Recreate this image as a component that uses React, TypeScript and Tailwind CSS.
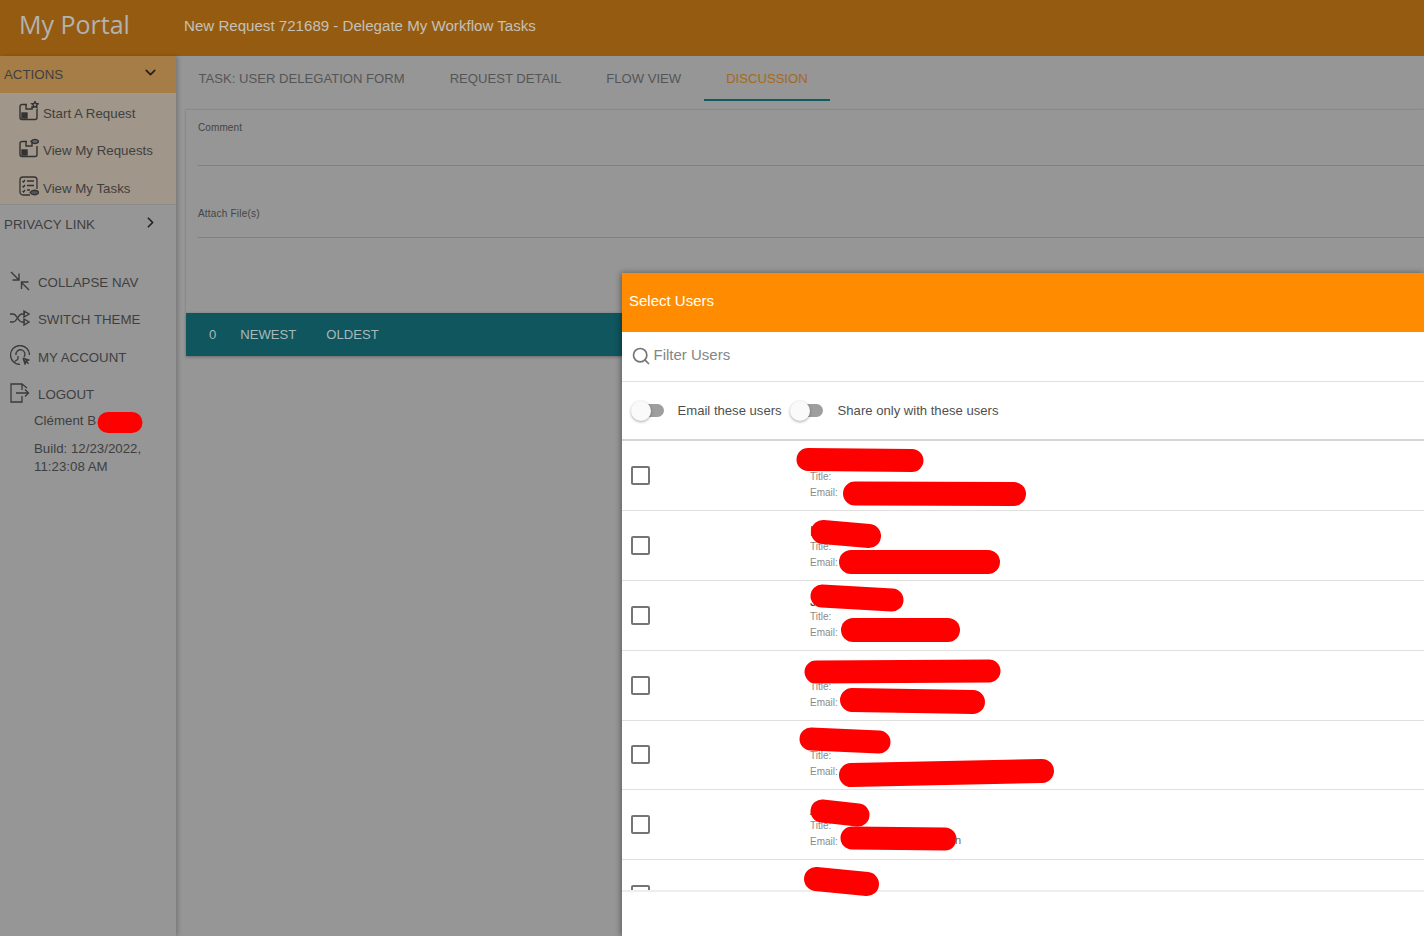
import React from "react";
import { Search, ChevronDown, ChevronRight } from "lucide-react";

const Pkg = ({ eye }: { eye?: boolean }) => (
  <svg width="20" height="20" viewBox="0 0 20 20" fill="none" stroke="#333" strokeWidth="1.400">
    <path d="M8 3.500H3a2 2 0 0 0-2 2V16.500a2 2 0 0 0 2 2h13a2 2 0 0 0 2-2V8" />
    <rect x="3" y="12" width="5" height="5" fill="#333" />
    <path d="M7 4v4h6V5" />
    {eye ? (
      <path d="M12 3.500c2-2.800 6-2.800 8 0-2 2.800-6 2.800-8 0z" fill="#666" />
    ) : (
      <path d="M16 .5l1 2 2.200.3-1.600 1.500.4 2.200-2-1-2 1 .4-2.200-1.600-1.500 2.200-.3z" />
    )}
  </svg>
);

const Tasks = () => (
  <svg width="20" height="20" viewBox="0 0 20 20" fill="none" stroke="#333" strokeWidth="1.300">
    <path d="M11 19H4a3 3 0 0 1-3-3V4a3 3 0 0 1 3-3h11a3 3 0 0 1 3 3v9" />
    <path d="M3.500 5l1 1 1.500-2M3.500 10l1 1 1.500-2M3.500 15l1 1 1.500-2M8 5h7M8 9.500h7M8 14h3" />
    <path d="M11 16.500c2-3 7-3 9 0-2 3-7 3-9 0z" fill="#555" />
  </svg>
);

const Collapse = () => (
  <svg width="20" height="20" viewBox="0 0 20 20" fill="none" stroke="#3a3a3a" strokeWidth="1.400">
    <path d="M1 1l8 8M9 2.500V9H2.500M19 19l-8-8M11.500 18v-7h7" />
  </svg>
);

const Theme = () => (
  <svg width="20" height="20" viewBox="0 0 20 20" fill="none" stroke="#3a3a3a" strokeWidth="1.400">
    <path d="M0 6h3c4 0 5 8 9 8h3M0 14h3c4 0 5-8 9-8h3M14 3l5 3-5 3zM14 11l5 3-5 3z" />
  </svg>
);

const Account = () => (
  <svg width="20" height="20" viewBox="0 0 20 20" fill="none" stroke="#3a3a3a" strokeWidth="1.300">
    <path d="M10 19.500A9.500 9.500 0 1 1 19.500 10" />
    <path d="M6 10a4.500 4.500 0 1 1 8 2M8 11v2.500c0 1.500-2 2-3.500 3" />
    <path d="M13 13l6 2-2.500 1 2 3M13 13l2 6 1.500-3" fill="#3a3a3a" />
  </svg>
);

const Logout = () => (
  <svg width="20" height="20" viewBox="0 0 20 20" fill="none" stroke="#3a3a3a" strokeWidth="1.300">
    <path d="M12 7V1H1v18h11v-6h0M6 10h12M15 6.500l3.500 3.500-3.500 3.500M12 1l5 4" />
  </svg>
);

const Toggle = () => (
  <span className="relative block w-[33px] h-[20px]">
    <span className="absolute left-[6px] top-[3.500px] w-[27px] h-[13px] rounded-full bg-[#9e9e9e]" />
    <span className="absolute left-0 top-0 w-[20px] h-[20px] rounded-full bg-[#fafafa] shadow-[0_1px_3px_rgba(0,0,0,0.35)]" />
  </span>
);

const Row = ({ h, name, text = true, up }: { h: string; name?: string; text?: boolean; up?: boolean }) => (
  <div className={`${h} shrink-0 flex items-center pl-[9px] border-b border-[#e0e0e0]`}>
    <span className={`w-[19px] h-[19px] rounded-[2px] border-2 border-[#757575] ${up ? "-mt-[2px]" : ""}`} />
    {text && (
      <div className="ml-[160.500px] pt-[2px] text-[10px] leading-[16px] text-[#8a8a8a]">
        <div className="h-[16px] text-[14px] text-[#444]">{name}</div>
        <div>Title:</div>
        <div>Email:</div>
      </div>
    )}
  </div>
);

const Nav = ({ icon, label }: { icon: React.ReactNode; label: string }) => (
  <div className="h-[37.300px] flex items-center pl-[10px] gap-[8px] text-[13.300px] text-[#3f3f3f]">
    <span className="w-[20px] h-[20px] -mt-[2px]">{icon}</span>
    <span className="mt-[3px]">{label}</span>
  </div>
);

const Sub = ({ icon, label }: { icon: React.ReactNode; label: string }) => (
  <div className="h-[37.300px] flex items-center pl-[19px] gap-[4px] text-[13.300px] text-[#3f3f3f]">
    <span className="w-[20px] h-[20px] -mt-[1px]">{icon}</span>
    <span className="mt-[5px]">{label}</span>
  </div>
);

const Tab = ({ label, active }: { label: string; active?: boolean }) => (
  <div className={`h-[45px] px-[22.500px] flex items-center text-[13.100px] whitespace-nowrap ${active ? "text-[#a5691b] border-y-2 border-t-transparent border-b-[#0d5c63]" : "text-[#555]"}`}>
    {label}
  </div>
);

const Blot = ({ d, w }: { d: string; w: number }) => (
  <path d={d} stroke="#ff0000" strokeWidth={w} strokeLinecap="round" fill="none" />
);

export default function App() {
  return (
    <div className="relative w-[1424px] h-[936px] overflow-hidden bg-[#969696] font-['Liberation_Sans',Arial,sans-serif]">
      <div className="h-[56px] flex bg-[#955c11]">
        <div className="w-[176px] shrink-0 pl-[19px] pt-[6px] text-[25px] leading-[36px] font-medium text-[#b2b2b2] font-['Open_Sans',sans-serif]">
          My Portal
        </div>
        <div className="pl-[8px] pt-[16px] text-[15.100px] leading-[20px] text-[#c4c0b8]">
          New Request 721689 - Delegate My Workflow Tasks
        </div>
      </div>

      <div className="flex h-[880px]">
        <aside className="w-[176px] shrink-0 bg-[#969696] shadow-[2px_0_4px_rgba(0,0,0,0.2)] z-10">
          <div className="h-[37px] bg-[#a67d46] flex items-center justify-between pl-[4px] pr-[17px] text-[13.300px] text-[#3f3f3f]">
            <span>ACTIONS</span>
            <ChevronDown size={17} strokeWidth={2.400} className="text-[#222] -mt-[4px]" />
          </div>
          <div className="h-[112px] bg-[#a0968a] border-b border-[#8c8c8c]">
            <Sub icon={<Pkg />} label="Start A Request" />
            <Sub icon={<Pkg eye />} label="View My Requests" />
            <Sub icon={<Tasks />} label="View My Tasks" />
          </div>
          <div className="h-[37px] flex items-center justify-between pl-[4px] pr-[17px] text-[13.400px] text-[#3f3f3f]">
            <span className="mt-[3px]">PRIVACY LINK</span>
            <ChevronRight size={17} strokeWidth={2.400} className="text-[#222] -mt-[2px]" />
          </div>
          <div className="h-[21px]" />
          <Nav icon={<Collapse />} label="COLLAPSE NAV" />
          <Nav icon={<Theme />} label="SWITCH THEME" />
          <Nav icon={<Account />} label="MY ACCOUNT" />
          <Nav icon={<Logout />} label="LOGOUT" />
          <div className="pl-[34px] pr-[30px] text-[13.300px] leading-[18px] text-[#3f3f3f]">
            <div className="mb-[10px]">Clément B</div>
            <div>Build: 12/23/2022, 11:23:08 AM</div>
          </div>
        </aside>

        <main className="flex-1 min-w-0 pl-[10px]">
          <div className="flex h-[45px] -ml-[10px]">
            <Tab label="TASK: USER DELEGATION FORM" />
            <Tab label="REQUEST DETAIL" />
            <Tab label="FLOW VIEW" />
            <Tab label="DISCUSSION" active />
          </div>
          <div className="mt-[9px] h-[203px] bg-[#969696] shadow-[0_0_2px_rgba(0,0,0,0.25)] pl-[12px]">
            <div className="pt-[12px] text-[10px] leading-[12px] text-[#444] tracking-[0.1px]">Comment</div>
            <div className="mt-[31px] h-px bg-[#808080]" />
            <div className="mt-[42px] text-[10px] leading-[12px] text-[#444] tracking-[0.2px]">Attach File(s)</div>
            <div className="mt-[17px] h-px bg-[#808080]" />
          </div>
          <div className="h-[43px] bg-[#0f565e] shadow-[0_1px_3px_rgba(0,0,0,0.3)] flex items-center text-[13.100px] text-[#a9b9bb]">
            <span className="ml-[23px]">0</span>
            <span className="ml-[24px]">NEWEST</span>
            <span className="ml-[30px]">OLDEST</span>
          </div>
        </main>
      </div>

      <div className="absolute left-[621.500px] top-[273px] right-0 bottom-0 bg-white shadow-[-1px_0_6px_rgba(0,0,0,0.4)] z-20 flex flex-col">
        <div className="h-[59px] shrink-0 bg-[#ff8c00] flex items-center pl-[7.500px] pb-[2px] text-[15px] text-white">Select Users</div>
        <div className="h-[50px] shrink-0 flex items-center pl-[9px] pb-[2px] gap-[3px] border-b border-[#e0e0e0] text-[15px] text-[#858585]">
          <Search size={20} strokeWidth={2} className="text-[#757575]" />
          <span>Filter Users</span>
        </div>
        <div className="h-[59px] shrink-0 flex items-center pl-[9px] border-b-2 border-[#d6d6d6] text-[13.100px] text-[#4f4f4f]">
          <Toggle />
          <span className="ml-[14px] mt-[1px]">Email these users</span>
          <span className="ml-[8px]"><Toggle /></span>
          <span className="ml-[15px] mt-[1px]">Share only with these users</span>
        </div>
        <div className="h-[451px] shrink-0 overflow-hidden border-b-2 border-[#eeeeee] flex flex-col">
          <Row h="h-[70px]" />
          <Row h="h-[70px]" name="K" />
          <Row h="h-[70px]" name="J" />
          <Row h="h-[70px]" />
          <Row h="h-[69px]" up />
          <Row h="h-[70px]" name="A" />
          <Row h="h-[70px]" text={false} />
        </div>
      </div>

      <svg className="absolute inset-0 z-30 pointer-events-none" width="1424" height="936">
        <Blot d="M108 422.500H132" w={21} />
        <Blot d="M808 459.500L912 460.500" w={23} />
        <Blot d="M855 493.500L1014 494" w={24} />
        <Blot d="M823 532L869 536" w={24} />
        <Blot d="M851 562L988 562" w={24} />
        <Blot d="M822 596L892 600" w={23} />
        <Blot d="M853 630L948 630" w={24} />
        <Blot d="M816 672L989 671" w={23} />
        <Blot d="M852 700L973 702" w={24} />
        <Blot d="M811 739L879 742" w={23} />
        <Blot d="M851 775L1042 771" w={24} />
        <Blot d="M822 811L858 815" w={23} />
        <Blot d="M852 838L945 839" w={23} />
        <Blot d="M816 879L867 884" w={24} />
      </svg>
      <span className="absolute z-40 left-[955px] top-[833px] text-[11px] leading-[14px] text-[#666]">n</span>
    </div>
  );
}
